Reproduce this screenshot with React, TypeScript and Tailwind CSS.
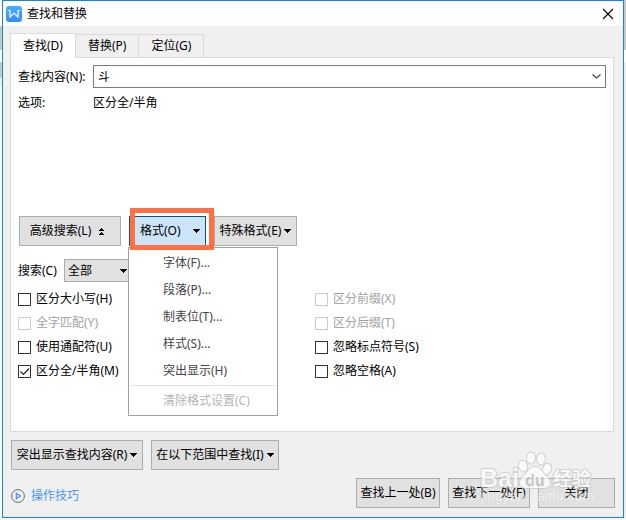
import { useState } from "react"
import { clsx } from "clsx"

const tabs = ["查找(D)", "替换(P)", "定位(G)"]

const formatItems = ["字体(F)...", "段落(P)...", "制表位(T)...", "样式(S)...", "突出显示(H)"]

type Option = { id: string; label: string; disabled?: boolean }

const leftOptions: Option[] = [
  { id: "case", label: "区分大小写(H)" },
  { id: "whole", label: "全字匹配(Y)", disabled: true },
  { id: "wildcard", label: "使用通配符(U)" },
  { id: "width", label: "区分全/半角(M)" },
]

const rightOptions: Option[] = [
  { id: "prefix", label: "区分前缀(X)", disabled: true },
  { id: "suffix", label: "区分后缀(T)", disabled: true },
  { id: "punct", label: "忽略标点符号(S)" },
  { id: "space", label: "忽略空格(A)" },
]

const buttonClass =
  "flex h-[30px] items-center justify-center whitespace-nowrap border border-[#adadad] bg-[#e1e1e1]"

function Caret({ className }: { className?: string }) {
  return (
    <svg className={clsx("h-1 w-[7px] shrink-0", className)} viewBox="0 0 7 4" shapeRendering="crispEdges" aria-hidden="true">
      <path d="M0 0h7v1H0zM1 1h5v1H1zM2 2h3v1H2zM3 3h1v1H3z" fill="#000" />
    </svg>
  )
}

function Logo() {
  return (
    <svg className="h-4 w-4" viewBox="0 0 16 16" aria-hidden="true">
      <defs>
        <linearGradient id="logo" x1="0" y1="0" x2="0" y2="1">
          <stop offset="0" stopColor="#45b0fc" />
          <stop offset="1" stopColor="#3a8bfa" />
        </linearGradient>
      </defs>
      <rect width="16" height="16" rx="3" fill="url(#logo)" />
      <path
        d="M2.3 4.5H4v6.6l4-4 4 4V4.5h1.7"
        fill="none"
        stroke="#fff"
        strokeWidth="1.2"
        strokeLinejoin="round"
      />
    </svg>
  )
}

function CheckOption({
  option,
  checked,
  onToggle,
}: {
  option: Option
  checked: boolean
  onToggle: (id: string) => void
}) {
  return (
    <label className={clsx("flex h-6 items-center gap-[5px]", option.disabled && "text-[#a3a3a3]")}>
      <span className="grid shrink-0 place-items-center">
        <input
          type="checkbox"
          checked={checked}
          disabled={option.disabled}
          onChange={() => onToggle(option.id)}
          className="col-start-1 row-start-1 h-[13px] w-[13px] appearance-none border border-[#333] bg-white disabled:border-[#ccc]"
        />
        {checked && (
          <svg className="pointer-events-none col-start-1 row-start-1 h-[13px] w-[13px]" viewBox="0 0 13 13">
            <path d="M2.5 6.5l3 3 5.5-6" fill="none" stroke="#222" strokeWidth="1.2" />
          </svg>
        )}
      </span>
      {option.label}
    </label>
  )
}

function Watermark() {
  return (
    <svg className="h-[52px] w-[116px] overflow-visible" viewBox="0 0 116 52" aria-hidden="true">
      <g
        fill="#fff"
        stroke="#c4c4c4"
        strokeWidth="2"
        strokeLinejoin="round"
        paintOrder="stroke"
        opacity="0.7"
        fontFamily="'Liberation Sans', 'Noto Sans CJK SC', sans-serif"
      >
        <ellipse cx="43" cy="14" rx="4" ry="5.4" transform="rotate(-15 43 14)" />
        <ellipse cx="51" cy="6" rx="4" ry="5.4" />
        <ellipse cx="61" cy="7" rx="4" ry="5.4" />
        <ellipse cx="67" cy="17" rx="4" ry="5.4" transform="rotate(20 67 17)" />
        <path d="M55 15c-6 0-7 5-10 8-4 3-6 6-5 10 2 4 9 3 15 3s13 1 15-3c1-4-1-7-5-10-3-3-4-8-10-8z" />
        <text x="0" y="35" fontSize="25" fontWeight="700">Bai</text>
        <text x="45" y="34" fontSize="16" fontWeight="700" fill="#b8b8b8" stroke="none">du</text>
        <text x="73" y="34" fontSize="19" fontWeight="700">经验</text>
        <text x="1" y="49" fontSize="14" strokeWidth="0.6" opacity="0.8">jingyan.baidu.com</text>
      </g>
    </svg>
  )
}

export default function App() {
  const [activeTab, setActiveTab] = useState(0)
  const [query, setQuery] = useState("斗")
  const [menuOpen, setMenuOpen] = useState(true)
  const [selected, setSelected] = useState<string[]>(["width"])

  const toggle = (id: string) =>
    setSelected((prev) => (prev.includes(id) ? prev.filter((item) => item !== id) : [...prev, id]))

  return (
    <div className="flex min-h-screen bg-[#f7f7f7] pb-0.5 font-['Noto_Sans','Noto_Sans_CJK_SC',sans-serif] text-xs leading-4 text-black">
      {/* Document window showing behind the dialog */}
      <div className="w-0.5 bg-white pt-[26px]">
        <div className="h-6 bg-[#c8c8c8]" />
        <div className="mt-3 h-4 bg-[#c8c8c8]" />
        <div className="h-[9px] bg-[#ececec]" />
      </div>

      <div className="relative flex flex-1 flex-col border border-[#1883d7] bg-[#f0f0f0]">
        {/* Title bar */}
        <header className="flex h-[25px] items-center gap-[5px] bg-white pl-[3px] pr-[9px]">
          <Logo />
          <h1 className="flex-1">查找和替换</h1>
          <button type="button" aria-label="关闭窗口">
            <svg className="h-3 w-3" viewBox="0 0 12 12">
              <path d="M1 1l10 10M11 1L1 11" stroke="#000" strokeWidth="1.1" />
            </svg>
          </button>
        </header>

        <main className="flex flex-1 flex-col pb-2 pl-[7px] pr-2 pt-[7px]">
          {/* Tabs */}
          <div role="tablist" className="flex h-6 items-end">
            {tabs.map((tab, index) => (
              <button
                key={tab}
                type="button"
                role="tab"
                aria-selected={activeTab === index}
                onClick={() => setActiveTab(index)}
                className={clsx(
                  "border-r border-t border-[#d9d9d9] px-3",
                  activeTab === index ? "relative -mb-px h-[25px] border-l bg-white" : "h-[23px] bg-[#f0f0f0]"
                )}
              >
                {tab}
              </button>
            ))}
          </div>

          <section className="mr-px flex h-[375px] flex-col border border-[#d9d9d9] bg-white px-[7px] pt-[7px]">
            <div className="flex items-center">
              <label htmlFor="query" className="w-[75px] shrink-0">
                查找内容(N):
              </label>
              <div className="flex h-[23px] flex-1 items-center border border-[#7a7a7a] bg-white px-1">
                <input
                  id="query"
                  value={query}
                  onChange={(e) => setQuery(e.target.value)}
                  className="min-w-0 flex-1 outline-none"
                />
                <button type="button" aria-label="搜索记录">
                  <svg className="h-[5px] w-[9px]" viewBox="0 0 9 5">
                    <path d="M0.5 0.5l4 3.5 4-3.5" fill="none" stroke="#444" strokeWidth="1.2" />
                  </svg>
                </button>
              </div>
            </div>
            <div className="mt-[7px] flex">
              <span className="w-[75px]">选项:</span>
              <span>区分全/半角</span>
            </div>

            {/* Search tools */}
            <div className="mt-auto flex gap-2 pl-px">
              <button type="button" className={clsx(buttonClass, "w-[102px] gap-2 pr-1.5")}>
                高级搜索(L)
                <svg className="h-[7px] w-[5px]" viewBox="0 0 5 7" shapeRendering="crispEdges" aria-hidden="true">
                  <path d="M2 0h1v1H2zM1 1h3v1H1zM0 2h5v1H0zM2 4h1v1H2zM1 5h3v1H1zM0 6h5v1H0z" fill="#000" />
                </svg>
              </button>
              <div className="relative">
                <button
                  type="button"
                  aria-haspopup="menu"
                  aria-expanded={menuOpen}
                  onClick={() => setMenuOpen(!menuOpen)}
                  className="flex h-[30px] w-[77px] items-center justify-between border border-[#005499] bg-[#cce4f7] pl-2.5 pr-[5px]"
                >
                  格式(O)
                  <Caret />
                </button>
                <div className="pointer-events-none absolute -top-2 left-px z-20 h-[42px] w-[84px] border-5 border-[#ff7043]" />
                {menuOpen && (
                  <div
                    role="menu"
                    className="absolute -left-px top-[31px] z-10 flex w-[150px] flex-col border border-[#a0a0a0] bg-white px-px pt-px text-[#444]"
                  >
                    {formatItems.map((item) => (
                      <button key={item} type="button" role="menuitem" className="h-[27px] pl-[33px] text-left">
                        {item}
                      </button>
                    ))}
                    <hr className="mt-px border-[#e5e5e5]" />
                    <button
                      type="button"
                      role="menuitem"
                      disabled
                      className="h-[29px] pl-[33px] text-left text-[#b5b5b5]"
                    >
                      清除格式设置(C)
                    </button>
                  </div>
                )}
              </div>
              <button type="button" className={clsx(buttonClass, "w-[83px] gap-[3px]")}>
                特殊格式(E)
                <Caret />
              </button>
            </div>

            <div className="mt-[13px] flex items-center">
              <label htmlFor="direction" className="w-[46px]">
                搜索(C)
              </label>
              <div className="grid items-center">
                <select
                  id="direction"
                  className="col-start-1 row-start-1 h-[23px] w-[68px] appearance-none border border-[#adadad] bg-[#e1e1e1] px-[3px]"
                >
                  <option>全部</option>
                  <option>向上</option>
                  <option>向下</option>
                </select>
                <Caret className="pointer-events-none col-start-1 row-start-1 mr-[5px] justify-self-end" />
              </div>
            </div>

            <div className="mb-12 mt-[5px] flex">
              <div className="w-[297px]">
                {leftOptions.map((option) => (
                  <CheckOption
                    key={option.id}
                    option={option}
                    checked={selected.includes(option.id)}
                    onToggle={toggle}
                  />
                ))}
              </div>
              <div>
                {rightOptions.map((option) => (
                  <CheckOption
                    key={option.id}
                    option={option}
                    checked={selected.includes(option.id)}
                    onToggle={toggle}
                  />
                ))}
              </div>
            </div>
          </section>

          <div className="mt-2 flex gap-2 pl-px">
            <button type="button" className={clsx(buttonClass, "w-[132px] gap-[3px]")}>
              突出显示查找内容(R)
              <Caret />
            </button>
            <button type="button" className={clsx(buttonClass, "w-[128px] gap-[3px]")}>
              在以下范围中查找(I)
              <Caret />
            </button>
          </div>

          {/* Footer */}
          <footer className="mt-2 flex items-center justify-between pl-px">
            <a href="#tips" className="flex items-center gap-1.5 pt-1.5 text-[#4d97f0]">
              <svg className="h-3.5 w-3.5" viewBox="0 0 14 14" aria-hidden="true">
                <circle cx="7" cy="7" r="6.4" fill="none" stroke="#666" strokeWidth="1" />
                <path d="M5.3 4.3v5.4L9.4 7z" fill="none" stroke="#3c8df0" strokeWidth="1.2" />
              </svg>
              操作技巧
            </a>
            <div className="flex gap-2">
              <button type="button" className={clsx(buttonClass, "w-[84px]")}>
                查找上一处(B)
              </button>
              <button type="button" className={clsx(buttonClass, "w-[82px]")}>
                查找下一处(F)
              </button>
              <button type="button" className={clsx(buttonClass, "w-[77px]")}>
                关闭
              </button>
            </div>
          </footer>
        </main>

        <div className="pointer-events-none absolute bottom-[13px] right-[27px]">
          <Watermark />
        </div>
      </div>

      <div className="w-0.5 bg-[#ececec]">
        <div className="h-[50px] bg-[#c8c8c8]" />
        <div className="h-3 bg-white" />
      </div>
    </div>
  )
}
